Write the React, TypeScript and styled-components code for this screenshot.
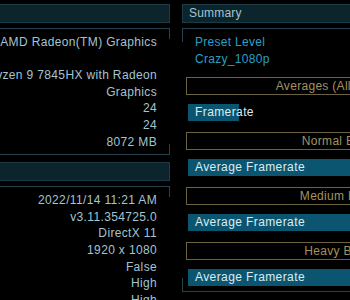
import styled, { createGlobalStyle, css } from "styled-components";

const colors = {
  page: "#000000",
  headerFill: "#0c252d",
  headerEdge: "#1d3b45",
  frame: "#27424c",
  value: "#a4c4d1",
  accent: "#2a9fc4",
  barFill: "#0b5570",
  barText: "#dcecf2",
  gold: "#6a6240",
  goldText: "#a39260",
};

const GlobalStyle = createGlobalStyle`
  html, body {
    margin: 0;
    padding: 0;
    background: ${colors.page};
  }
  body {
    font-family: "Liberation Sans", Arial, sans-serif;
    font-size: 12px;
  }
`;

// frame with full top/bottom lines and short ticks on the sides
const cornerFrame = (c: string, len = 10) => css`
  border-top: 1px solid ${c};
  border-bottom: 1px solid ${c};
  background:
    linear-gradient(${c}, ${c}) left top / 1px ${len}px no-repeat,
    linear-gradient(${c}, ${c}) right top / 1px ${len}px no-repeat,
    linear-gradient(${c}, ${c}) left bottom / 1px ${len}px no-repeat,
    linear-gradient(${c}, ${c}) right bottom / 1px ${len}px no-repeat;
`;

type Row = { label: string; value: string };

const systemRows: Row[] = [
  { label: "GPU 0 Name", value: "AMD Radeon(TM) Graphics" },
  { label: "GPU 0 Driver", value: "" },
  { label: "CPU Name", value: "AMD Ryzen 9 7845HX with Radeon Graphics" },
  { label: "Logical Cores", value: "24" },
  { label: "Worker Threads", value: "24" },
  { label: "Physical Memory", value: "8072 MB" },
];

const settingRows: Row[] = [
  { label: "Date", value: "2022/11/14 11:21 AM" },
  { label: "Version", value: "v3.11.354725.0" },
  { label: "API", value: "DirectX 11" },
  { label: "Resolution", value: "1920 x 1080" },
  { label: "Fullscreen", value: "False" },
  { label: "Bloom Quality", value: "High" },
  { label: "PointLight Quality", value: "High" },
];

const batches = [
  { title: "Normal Batch", bar: "Average Framerate" },
  { title: "Medium Batch", bar: "Average Framerate" },
  { title: "Heavy Batch", bar: "Average Framerate" },
];

export default function App() {
  return (
    <>
      <GlobalStyle />
      <Page>
        <LeftColumn>
          <SectionHeader>System Specifications</SectionHeader>
          <InfoBox>
            {systemRows.map((r) => (
              <InfoRow key={r.label}>
                <Label>{r.label}</Label>
                <Value>{r.value}</Value>
              </InfoRow>
            ))}
          </InfoBox>
          <SectionHeader $gap>Benchmark Settings</SectionHeader>
          <InfoBox>
            {settingRows.map((r) => (
              <InfoRow key={r.label}>
                <Label>{r.label}</Label>
                <Value>{r.value}</Value>
              </InfoRow>
            ))}
          </InfoBox>
        </LeftColumn>

        <RightColumn>
          <SectionHeader>Summary</SectionHeader>
          <SummaryBox>
            <Preset>
              <div>Preset Level</div>
              <div>Crazy_1080p</div>
            </Preset>
            <BatchTitle $first>Averages (All Batches)</BatchTitle>
            <Bar style={{ backgroundSize: "51px 100%" }}>Framerate</Bar>
            {batches.map((b) => (
              <div key={b.title}>
                <BatchTitle>{b.title}</BatchTitle>
                <Bar style={{ backgroundSize: "100% 100%" }}>{b.bar}</Bar>
              </div>
            ))}
          </SummaryBox>
        </RightColumn>
      </Page>
    </>
  );
}

const Page = styled.div`
  width: 350px;
  height: 300px;
  overflow: hidden;
  display: flex;
  align-items: flex-start;
  gap: 12px;
`;

const LeftColumn = styled.div`
  flex-shrink: 0;
  width: 360px;
  margin-left: -190px;
`;

const RightColumn = styled.div`
  flex-shrink: 0;
  width: 326px;
`;

const SectionHeader = styled.div<{ $gap?: boolean }>`
  box-sizing: border-box;
  height: 19px;
  margin-top: ${(p) => (p.$gap ? "7px" : "4px")};
  padding: 0 6px;
  background: ${colors.headerFill};
  border: 1px solid ${colors.headerEdge};
  color: ${colors.value};
  line-height: 17px;
  letter-spacing: 0.2px;
`;

const InfoBox = styled.div`
  ${cornerFrame(colors.frame)};
  margin-top: 5px;
  padding: 5px 13px 4px 6px;
`;

const InfoRow = styled.div`
  display: grid;
  grid-template-columns: 1fr 240px;
  line-height: 16.6px;
  color: ${colors.value};
  letter-spacing: 0.35px;
`;

const Label = styled.span`
  white-space: nowrap;
`;

const Value = styled.span`
  text-align: right;
`;

const SummaryBox = styled.div`
  ${cornerFrame(colors.frame, 13)};
  margin-top: 5px;
  padding: 5px 0 5px 0;
`;

const Preset = styled.div`
  padding-left: 13px;
  color: ${colors.accent};
  line-height: 16.6px;
  letter-spacing: 0.3px;
`;

const BatchTitle = styled.div<{ $first?: boolean }>`
  box-sizing: border-box;
  height: 18px;
  margin: ${(p) => (p.$first ? "10px" : "11px")} 14px 0 4px;
  border: 1px solid ${colors.gold};
  color: ${colors.goldText};
  text-align: center;
  line-height: 16px;
  letter-spacing: 0.3px;
  white-space: nowrap;
`;

const Bar = styled.div`
  height: 17px;
  margin: 9px 0 0 6px;
  padding-left: 7px;
  background: linear-gradient(${colors.barFill}, ${colors.barFill}) left top no-repeat;
  color: ${colors.barText};
  line-height: 17px;
  letter-spacing: 0.4px;
  white-space: nowrap;
`;
